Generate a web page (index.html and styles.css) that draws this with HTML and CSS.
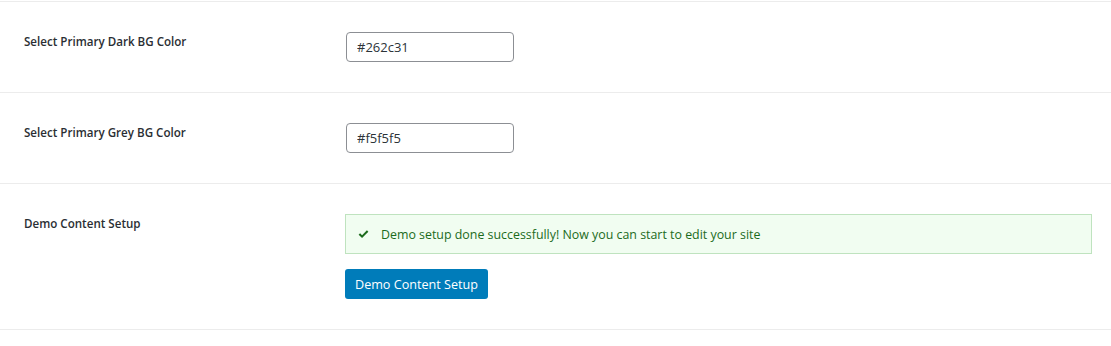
FILE: index.html
```html
<!DOCTYPE html>
<html lang="en">
<head>
    <meta charset="UTF-8">
    <meta name="viewport" content="width=device-width, initial-scale=1.0">
    <title>Theme Options</title>
    <link rel="stylesheet" href="styles.css">
</head>
<body>

    <div class="settings">
        <div class="setting-row">
            <label class="setting-label" for="darkBg">Select Primary Dark BG Color</label>
            <div class="setting-field">
                <input type="text" id="darkBg" class="color-input" value="#262c31">
            </div>
        </div>

        <div class="setting-row">
            <label class="setting-label" for="greyBg">Select Primary Grey BG Color</label>
            <div class="setting-field">
                <input type="text" id="greyBg" class="color-input" value="#f5f5f5">
            </div>
        </div>

        <div class="setting-row">
            <div class="setting-label">Demo Content Setup</div>
            <div class="setting-field">
                <div class="notice-success">
                    <svg class="check-icon" viewBox="0 0 12 10" width="11" height="9">
                        <path d="M0.6 5.2 L2.2 3.6 L4.4 5.8 L9.8 0.4 L11.4 2 L4.4 9 Z" fill="#1c6b1c"/>
                    </svg>
                    <span>Demo setup done successfully! Now you can start to edit your site</span>
                </div>
                <button class="demo-btn">Demo Content Setup</button>
            </div>
        </div>
    </div>

</body>
</html>
```

FILE: styles.css
```css
body {
    margin: 0;
    background: #fff;
    font-family: 'Open Sans', 'Noto Sans', sans-serif;
    font-size: 13px;
    color: #1d2327;
}

.settings {
    margin-top: 1px;
    border-top: 1px solid #ececec;
}

.setting-row {
    display: grid;
    grid-template-columns: 321px 1fr;
    padding: 30px 19px 30px 24px;
    border-bottom: 1px solid #ececec;
}

.setting-label {
    font-weight: 600;
    font-size: 11.6px;
    line-height: 18px;
    padding-top: 1px;
    color: #2a2e33;
}

.setting-field {
    display: flex;
    flex-direction: column;
    align-items: flex-start;
}

.color-input {
    box-sizing: border-box;
    width: 168px;
    height: 30px;
    margin-left: 1px;
    padding: 0 10px;
    font-family: inherit;
    font-size: 13px;
    color: #2c3338;
    border: 1px solid #8c8f94;
    border-radius: 4px;
    background: #fff;
    outline: none;
}

.notice-success {
    box-sizing: border-box;
    align-self: stretch;
    display: flex;
    align-items: center;
    height: 40px;
    padding: 0 12px;
    background: #f1fdf1;
    border: 1px solid #bfe3bf;
    color: #1c6b1c;
    font-size: 12.4px;
}

.check-icon {
    margin-right: 12px;
}

.demo-btn {
    box-sizing: border-box;
    margin-top: 15px;
    height: 30px;
    padding: 0 10px;
    font-family: inherit;
    font-size: 12.6px;
    color: #fff;
    background: #007cba;
    border: none;
    border-radius: 3px;
    cursor: pointer;
}
```
